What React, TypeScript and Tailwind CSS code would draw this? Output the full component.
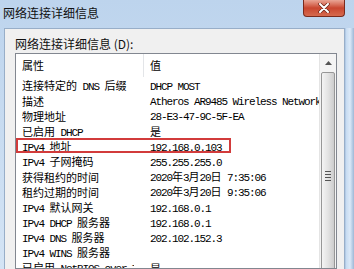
import React from 'react';

const rows: [string, string][] = [
  ['连接特定的 DNS 后缀', 'DHCP MOST'],
  ['描述', 'Atheros AR9485 Wireless Network Adapter'],
  ['物理地址', '28-E3-47-9C-5F-EA'],
  ['已启用 DHCP', '是'],
  ['IPv4 地址', '192.168.0.103'],
  ['IPv4 子网掩码', '255.255.255.0'],
  ['获得租约的时间', '2020年3月20日 7:35:06'],
  ['租约过期的时间', '2020年3月20日 9:35:06'],
  ['IPv4 默认网关', '192.168.0.1'],
  ['IPv4 DHCP 服务器', '192.168.0.1'],
  ['IPv4 DNS 服务器', '202.102.152.3'],
  ['IPv4 WINS 服务器', ''],
  ['已启用 NetBIOS over Tcpip', '是'],
];

// Chinese runs get the CJK font, everything else the narrow mono look
function Mixed({ text }: { text: string }) {
  const parts = text.split(/([\u3400-\u9fff]+)/).filter(Boolean);
  return (
    <>
      {parts.map((p, i) =>
        /[\u3400-\u9fff]/.test(p) ? (
          <span key={i} className="font-['Noto_Sans_CJK_SC',sans-serif] text-[11px] tracking-normal">
            {p}
          </span>
        ) : (
          <span key={i} className="font-['Liberation_Mono',monospace] text-[11px] tracking-[-1.1px] whitespace-pre">
            {p}
          </span>
        )
      )}
    </>
  );
}

export default function App() {
  return (
    <div className="w-[354px] h-[269px] overflow-hidden flex flex-col bg-gradient-to-b from-[#bdd4ed] to-[#d4e4f5] text-black">
      {/* title bar */}
      <div className="h-[28px] shrink-0 flex items-start">
        <span className="pl-[3px] pt-[4px] text-[12px] leading-[18px] text-[#111] font-['Noto_Sans_CJK_SC',sans-serif]">
          网络连接详细信息
        </span>
        <div className="ml-auto mr-[9px] w-[42px] h-[17px] rounded-b-[4px] border border-t-0 border-[#7a2a1c] bg-gradient-to-b from-[#e9a595] via-[#c9462f] to-[#d66a4e] flex items-center justify-center">
          <svg width="12" height="10" viewBox="0 0 12 10">
            <path d="M2 1 L10 9 M10 1 L2 9" stroke="#6b2418" strokeWidth="3.4" strokeLinecap="round" />
            <path d="M2 1 L10 9 M10 1 L2 9" stroke="#ffffff" strokeWidth="2" strokeLinecap="round" />
          </svg>
        </div>
      </div>

      <div className="flex-1 flex min-h-0">
        <div className="w-[4px] shrink-0" />
        <div className="flex-1 min-w-0 bg-[#f0f0f0] border-l border-t border-r border-[#98aec8] flex flex-col pl-[10px] pr-[7px]">
          <div className="h-[24px] shrink-0 pt-[7px] leading-[16px] text-[12px] font-['Noto_Sans_CJK_SC',sans-serif] text-[#111]">
            网络连接详细信息 (D):
          </div>

          <div className="flex-1 min-h-0 border border-[#828790] bg-white flex overflow-hidden">
            <div className="flex-1 min-w-0 flex flex-col">
              <div className="h-[23px] shrink-0 flex">
                <div className="w-[128px] shrink-0 pl-[6px] flex items-center border-r border-[#e3e5e8]">
                  <Mixed text="属性" />
                </div>
                <div className="flex-1 pl-[6px] flex items-center">
                  <Mixed text="值" />
                </div>
              </div>
              {rows.map(([k, v], i) => (
                <div key={i} className="relative h-[15.2px] shrink-0 flex items-center leading-none">
                  <div className="w-[128px] shrink-0 pl-[6px]">
                    <div className="w-[112px] overflow-hidden whitespace-nowrap">
                      <Mixed text={k} />
                    </div>
                  </div>
                  <div className="flex-1 min-w-0 pl-[6px] overflow-hidden whitespace-nowrap">
                    <Mixed text={v} />
                  </div>
                  {k === 'IPv4 地址' && (
                    <div className="absolute left-0 top-0 h-full w-[215px] border-2 border-[#d23b3b]" />
                  )}
                </div>
              ))}
            </div>

            {/* vertical scrollbar */}
            <div className="w-[17px] shrink-0 border-l border-[#e4e4e4] bg-[#f4f4f4] flex flex-col">
              <div className="h-[17px] shrink-0 flex items-center justify-center">
                <svg width="7" height="4" viewBox="0 0 7 4">
                  <path d="M0 4 L3.5 0 L7 4 Z" fill="#555" />
                </svg>
              </div>
              <div className="mt-[1px] mx-[1px] h-[208px] shrink-0 rounded-[2px] border border-[#979797] bg-gradient-to-r from-[#f4f4f4] via-[#e3e3e3] to-[#cdcdcd] flex flex-col items-center justify-center gap-[2px]">
                <div className="w-[6px] h-[1px] bg-[#555]" />
                <div className="w-[6px] h-[1px] bg-[#555]" />
                <div className="w-[6px] h-[1px] bg-[#555]" />
                <div className="w-[6px] h-[1px] bg-[#555]" />
              </div>
            </div>
          </div>
        </div>
        <div className="w-[9px] shrink-0 border-l border-[#b3cbe6] bg-gradient-to-r from-[#c6dbf1] via-[#dbe9f8] to-[#9fb8d6]" />
      </div>
    </div>
  );
}
